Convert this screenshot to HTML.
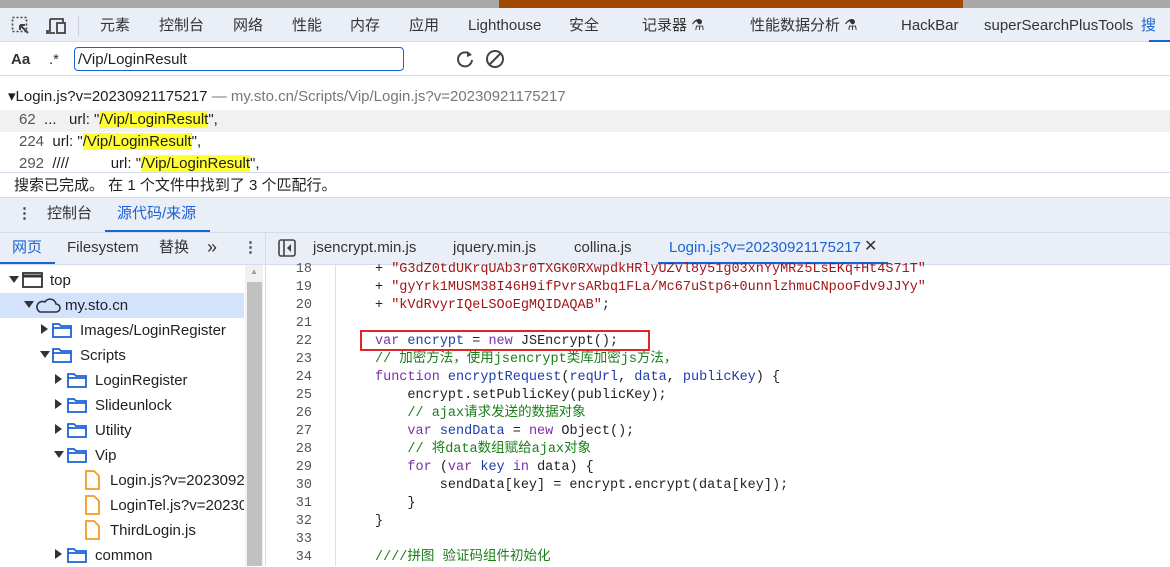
<!DOCTYPE html>
<html><head><meta charset="utf-8"><style>
*{margin:0;padding:0;box-sizing:border-box}
body{width:1170px;height:566px;overflow:hidden;background:#fff;font-family:"Liberation Sans","Noto Sans CJK SC",sans-serif;font-size:15px;color:#1f1f1f;position:relative}
.a{position:absolute;white-space:nowrap;line-height:18px}
.mono{font-family:"Liberation Mono","Noto Sans CJK SC",monospace;font-size:13.5px}
.k{color:#7c2fb0}.v{color:#1d3ea8}.s{color:#a31515}.c{color:#1a7f1a}
.hl{background:#ffff33}
</style></head><body>
<div class="a" style="left:0;top:0;width:1170px;height:8px;background:#a9a9a9"></div>
<div class="a" style="left:499px;top:0;width:464px;height:8px;background:#a04800"></div>
<div class="a" style="left:0;top:8px;width:1170px;height:34px;background:#eaeff7;border-bottom:1px solid #d3dceb"></div>
<svg class="a" style="left:11px;top:16px" width="20" height="20"><rect x="1.5" y="1.5" width="14" height="14" fill="none" stroke="#444" stroke-width="1.6" stroke-dasharray="2 2"/><path d="M9 9 L17 17 M9 9 h5 M9 9 v5" stroke="#444" stroke-width="2" fill="none"/></svg>
<svg class="a" style="left:46px;top:16px" width="22" height="20"><path d="M4 3 h13 v3 M4 3 v12 h-3 v2 h8" stroke="#444" stroke-width="1.8" fill="none"/><rect x="11" y="7" width="8" height="10" fill="none" stroke="#444" stroke-width="1.8"/></svg>
<div class="a" style="left:78px;top:16px;width:1px;height:20px;background:#ccd"></div>
<div class="a" style="top:17px;left:100px;color:#333">元素</div>
<div class="a" style="top:17px;left:159px;color:#333">控制台</div>
<div class="a" style="top:17px;left:233px;color:#333">网络</div>
<div class="a" style="top:17px;left:292px;color:#333">性能</div>
<div class="a" style="top:17px;left:350px;color:#333">内存</div>
<div class="a" style="top:17px;left:409px;color:#333">应用</div>
<div class="a" style="top:17px;left:468px;color:#333">Lighthouse</div>
<div class="a" style="top:17px;left:569px;color:#333">安全</div>
<div class="a" style="top:17px;left:642px;color:#333">记录器 ⚗</div>
<div class="a" style="top:17px;left:750px;color:#333">性能数据分析 ⚗</div>
<div class="a" style="top:17px;left:901px;color:#333">HackBar</div>
<div class="a" style="top:17px;left:984px;color:#333">superSearchPlusTools</div>
<div class="a" style="top:17px;left:1141px;color:#1a62d6">搜</div>
<div class="a" style="left:1149px;top:40px;width:21px;height:2px;background:#1a62d6"></div>

<div class="a" style="top:51px;left:11px;font-weight:bold;color:#333">Aa</div>
<div class="a" style="top:51px;left:49px;color:#333">.*</div>
<div class="a" style="left:74px;top:47px;width:330px;height:24px;border:1px solid #1a62d6;border-radius:4px;padding:3px 0 0 3px">/Vip/LoginResult</div>
<svg class="a" style="left:455px;top:49px" width="20" height="20"><path d="M15.5 6 A7 7 0 1 0 17 11" stroke="#444" stroke-width="2" fill="none"/><path d="M12 2 l5 4 l-5 2z" fill="#444"/></svg>
<svg class="a" style="left:485px;top:49px" width="20" height="20"><circle cx="10" cy="10" r="8" stroke="#444" stroke-width="2" fill="none"/><path d="M4.5 15.5 L15.5 4.5" stroke="#444" stroke-width="2"/></svg>
<div class="a" style="left:0;top:75px;width:1170px;height:1px;background:#d3dceb"></div>

<div class="a" style="top:88px;left:8px">▾Login.js?v=20230921175217 <span style="color:#777"> — my.sto.cn/Scripts/Vip/Login.js?v=20230921175217</span></div>
<div class="a" style="left:0;top:110px;width:1170px;height:22px;background:#f1f1f1"></div>
<div class="a" style="top:111px;left:19px"><span style="color:#555">62</span>&nbsp; ... &nbsp; url: "<span class="hl">/Vip/LoginResult</span>",</div>
<div class="a" style="top:133px;left:19px"><span style="color:#555">224</span>&nbsp; url: "<span class="hl">/Vip/LoginResult</span>",</div>
<div class="a" style="top:155px;left:19px"><span style="color:#555">292</span>&nbsp; ////&nbsp;&nbsp;&nbsp;&nbsp;&nbsp;&nbsp;&nbsp;&nbsp;&nbsp; url: "<span class="hl">/Vip/LoginResult</span>",</div>
<div class="a" style="left:0;top:172px;width:1170px;height:1px;background:#d3dceb"></div>
<div class="a" style="top:177px;left:14px">搜索已完成。 在 1 个文件中找到了 3 个匹配行。</div>

<div class="a" style="left:0;top:197px;width:1170px;height:67px;background:#eaeff7;border-top:1px solid #d3dceb"></div>
<div class="a" style="left:0;top:232px;width:1170px;height:1px;background:#d3dceb"></div>
<div class="a" style="top:205px;left:17px;font-weight:bold;color:#444">⋮</div>
<div class="a" style="top:205px;left:47px;color:#333">控制台</div>
<div class="a" style="top:205px;left:117px;color:#1a62d6">源代码/来源</div>
<div class="a" style="left:105px;top:230px;width:105px;height:2px;background:#1a62d6"></div>

<div class="a" style="top:239px;left:12px;color:#1a62d6">网页</div>
<div class="a" style="left:0;top:262px;width:55px;height:2px;background:#1a62d6"></div>
<div class="a" style="top:239px;left:67px;color:#333">Filesystem</div>
<div class="a" style="top:239px;left:159px;color:#333">替换</div>
<div class="a" style="top:238px;left:207px;color:#333;font-size:18px">»</div>
<div class="a" style="top:239px;left:243px;font-weight:bold;color:#444">⋮</div>
<div class="a" style="left:265px;top:233px;width:1px;height:333px;background:#d3dceb"></div>
<svg class="a" style="left:278px;top:239px" width="18" height="18"><rect x="1" y="1" width="16" height="16" rx="2" fill="none" stroke="#444" stroke-width="1.6"/><path d="M6 1 v16" stroke="#444" stroke-width="1.6"/><path d="M13 5 l-4 4 l4 4z" fill="#444"/></svg>
<div class="a" style="top:239px;left:313px;color:#333">jsencrypt.min.js</div>
<div class="a" style="top:239px;left:453px;color:#333">jquery.min.js</div>
<div class="a" style="top:239px;left:574px;color:#333">collina.js</div>
<div class="a" style="top:239px;left:669px;color:#1a62d6">Login.js?v=20230921175217</div>
<div class="a" style="top:238px;left:864px;color:#333;font-size:16px">✕</div>
<div class="a" style="left:658px;top:262px;width:230px;height:2px;background:#1a62d6"></div>
<div class="a" style="left:0;top:264px;width:1170px;height:1px;background:#d3dceb"></div>

<div class="a" style="left:0;top:293px;width:244px;height:25px;background:#d3e3fd"></div>
<div class="a" style="left:245px;top:265px;width:18px;height:301px;background:#f1f1f1"></div>
<div class="a" style="left:247px;top:282px;width:15px;height:284px;background:#c1c1c1"></div>
<div class="a" style="left:250px;top:268px;font-size:8px;color:#999;line-height:8px">▲</div>
<svg class="a" style="left:0;top:265px" width="244" height="301">
<g fill="#333"><path d="M9 11 l10 0 l-5 7z"/><path d="M24 36 l10 0 l-5 7z"/><path d="M41 59 l0 10 l7 -5z"/><path d="M40 86 l10 0 l-5 7z"/><path d="M55 109 l0 10 l7 -5z"/><path d="M55 134 l0 10 l7 -5z"/><path d="M55 159 l0 10 l7 -5z"/><path d="M54 186 l10 0 l-5 7z"/><path d="M55 284 l0 10 l7 -5z"/></g>
<rect x="23" y="8" width="19" height="14" fill="none" stroke="#333" stroke-width="1.8"/><path d="M23 11 h19" stroke="#333" stroke-width="3"/>
<path d="M40 47 h16 a4 4 0 0 0 0-8 a6 6 0 0 0 -11 -2 a5 5 0 0 0 -5 10z" fill="none" stroke="#333" stroke-width="1.6"/>
<g fill="none" stroke="#1a62d6" stroke-width="1.8">
<path d="M53 59 h6 l2 2 h10 v11 h-18z M53 63 h18"/><path d="M53 84 h6 l2 2 h10 v11 h-18z M53 88 h18"/>
<path d="M68 109 h6 l2 2 h10 v11 h-18z M68 113 h18"/><path d="M68 134 h6 l2 2 h10 v11 h-18z M68 138 h18"/><path d="M68 159 h6 l2 2 h10 v11 h-18z M68 163 h18"/><path d="M68 184 h6 l2 2 h10 v11 h-18z M68 188 h18"/><path d="M68 284 h6 l2 2 h10 v11 h-18z M68 288 h18"/></g>
<g fill="none" stroke="#f29b22" stroke-width="1.8"><path d="M86 206 h8 l5 5 v13 h-13z"/><path d="M86 231 h8 l5 5 v13 h-13z"/><path d="M86 256 h8 l5 5 v13 h-13z"/></g>
</svg>
<div class="a" style="top:272px;left:50px">top</div>
<div class="a" style="top:297px;left:65px">my.sto.cn</div>
<div class="a" style="top:322px;left:80px">Images/LoginRegister</div>
<div class="a" style="top:347px;left:80px">Scripts</div>
<div class="a" style="top:372px;left:95px">LoginRegister</div>
<div class="a" style="top:397px;left:95px">Slideunlock</div>
<div class="a" style="top:422px;left:95px">Utility</div>
<div class="a" style="top:447px;left:95px">Vip</div>
<div class="a" style="top:472px;left:110px;width:134px;overflow:hidden">Login.js?v=20230921175217</div>
<div class="a" style="top:497px;left:110px;width:134px;overflow:hidden">LoginTel.js?v=20230921</div>
<div class="a" style="top:522px;left:110px">ThirdLogin.js</div>
<div class="a" style="top:547px;left:95px">common</div>

<div class="a" style="left:335px;top:265px;width:1px;height:301px;background:#e0e0e0"></div>
<div class="a mono" style="left:270px;top:261px;width:42px;text-align:right;color:#555;line-height:18px">18<br>19<br>20<br>21<br>22<br>23<br>24<br>25<br>26<br>27<br>28<br>29<br>30<br>31<br>32<br>33<br>34</div>
<div class="a mono" style="left:375px;top:261px;line-height:18px;white-space:pre;color:#222">+ <span class="s">"G3dZ0tdUKrqUAb3r0TXGK0RXwpdkHRlyUZvl8y51g03xnYyMRz5LsEKq+Ht4S71T"</span>
+ <span class="s">"gyYrk1MUSM38I46H9ifPvrsARbq1FLa/Mc67uStp6+0unnlzhmuCNpooFdv9JJYy"</span>
+ <span class="s">"kVdRvyrIQeLSOoEgMQIDAQAB"</span>;

<span class="k">var</span> <span class="v">encrypt</span> = <span class="k">new</span> JSEncrypt();
<span class="c">// 加密方法，使用jsencrypt类库加密js方法，</span>
<span class="k">function</span> <span class="v">encryptRequest</span>(<span class="v">reqUrl</span>, <span class="v">data</span>, <span class="v">publicKey</span>) {
    encrypt.setPublicKey(publicKey);
    <span class="c">// ajax请求发送的数据对象</span>
    <span class="k">var</span> <span class="v">sendData</span> = <span class="k">new</span> Object();
    <span class="c">// 将data数组赋给ajax对象</span>
    <span class="k">for</span> (<span class="k">var</span> <span class="v">key</span> <span class="k">in</span> data) {
        sendData[key] = encrypt.encrypt(data[key]);
    }
}

<span class="c">////拼图 验证码组件初始化</span></div>
<div class="a" style="left:360px;top:330px;width:290px;height:21px;border:2px solid #e0262b"></div>
</body></html>
